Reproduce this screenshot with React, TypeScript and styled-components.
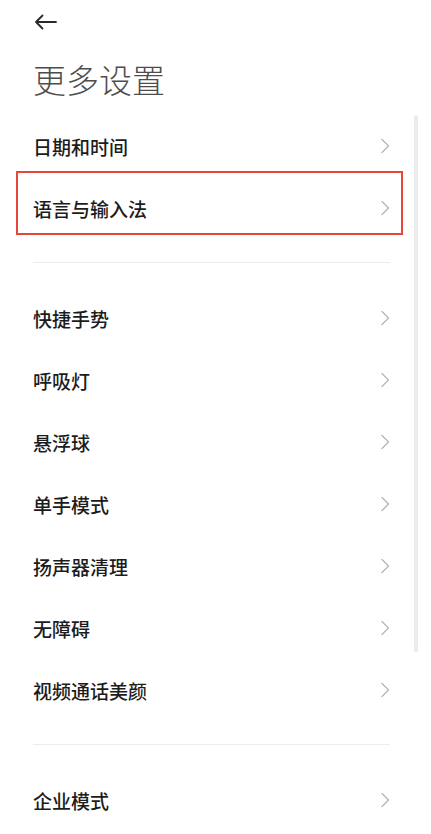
import React from "react";
import styled, { createGlobalStyle } from "styled-components";

const GlobalStyle = createGlobalStyle`
  html, body {
    margin: 0;
    padding: 0;
    background: #ffffff;
  }
  body {
    font-family: "Noto Sans CJK SC", "Noto Sans", Roboto, sans-serif;
  }
`;

const Screen = styled.div`
  position: relative;
  width: 431px;
  height: 834px;
  overflow: hidden;
  background: #fff;
`;

const Header = styled.header`
  height: 115px;
  padding: 0 33px;
  box-sizing: border-box;
  display: flex;
  flex-direction: column;
`;

const BackButton = styled.button`
  width: 26px;
  height: 22px;
  margin: 11px 0 0 1px;
  padding: 0;
  border: none;
  background: none;
  display: flex;
  align-items: center;
`;

const Title = styled.h1`
  margin: 26px 0 0;
  font-size: 33px;
  font-weight: 300;
  line-height: 40px;
  color: #4d4d4d;
`;

const List = styled.div`
  display: flex;
  flex-direction: column;
`;

const Row = styled.div`
  position: relative;
  height: 62px;
  padding: 0 41px 0 33px;
  display: flex;
  align-items: center;
  justify-content: space-between;
`;

const Label = styled.span`
  font-size: 19px;
  font-weight: 500;
  color: #1c1c1c;
`;

const Divider = styled.hr`
  margin: 23px 41px 24px 33px;
  border: none;
  height: 1px;
  background: #ececec;
`;

const Highlight = styled.div`
  position: absolute;
  left: 16px;
  right: 28px;
  top: -6px;
  height: 64px;
  box-sizing: border-box;
  border: 2px solid #e8453c;
  pointer-events: none;
`;

const ScrollBar = styled.div`
  position: absolute;
  right: 13px;
  top: 115px;
  width: 4px;
  height: 537px;
  border-radius: 2px;
  background: #ececec;
`;

const Chevron = () => (
  <svg width="10" height="16" viewBox="0 0 10 16" fill="none">
    <path d="M2 1.5L8.5 8L2 14.5" stroke="#b8b8b8" strokeWidth="1.4" strokeLinecap="round" strokeLinejoin="round" />
  </svg>
);

const BackArrow = () => (
  <svg width="24" height="16" viewBox="0 0 24 16" fill="none">
    <path d="M22 8H2M8.5 1.5L2 8l6.5 6.5" stroke="#2a2a2a" strokeWidth="1.8" strokeLinecap="round" strokeLinejoin="round" />
  </svg>
);

type Item = { label: string; highlighted?: boolean };

const groups: Item[][] = [
  [{ label: "日期和时间" }, { label: "语言与输入法", highlighted: true }],
  [
    { label: "快捷手势" },
    { label: "呼吸灯" },
    { label: "悬浮球" },
    { label: "单手模式" },
    { label: "扬声器清理" },
    { label: "无障碍" },
    { label: "视频通话美颜" },
  ],
  [{ label: "企业模式" }],
];

const App = () => {
  return (
    <>
      <GlobalStyle />
      <Screen>
        <Header>
          <BackButton aria-label="返回">
            <BackArrow />
          </BackButton>
          <Title>更多设置</Title>
        </Header>
        <List>
          {groups.map((group, gi) => (
            <React.Fragment key={gi}>
              {gi > 0 && <Divider />}
              {group.map((item) => (
                <Row key={item.label}>
                  <Label>{item.label}</Label>
                  <Chevron />
                  {item.highlighted && <Highlight />}
                </Row>
              ))}
            </React.Fragment>
          ))}
        </List>
        <ScrollBar />
      </Screen>
    </>
  );
};

export default App;
